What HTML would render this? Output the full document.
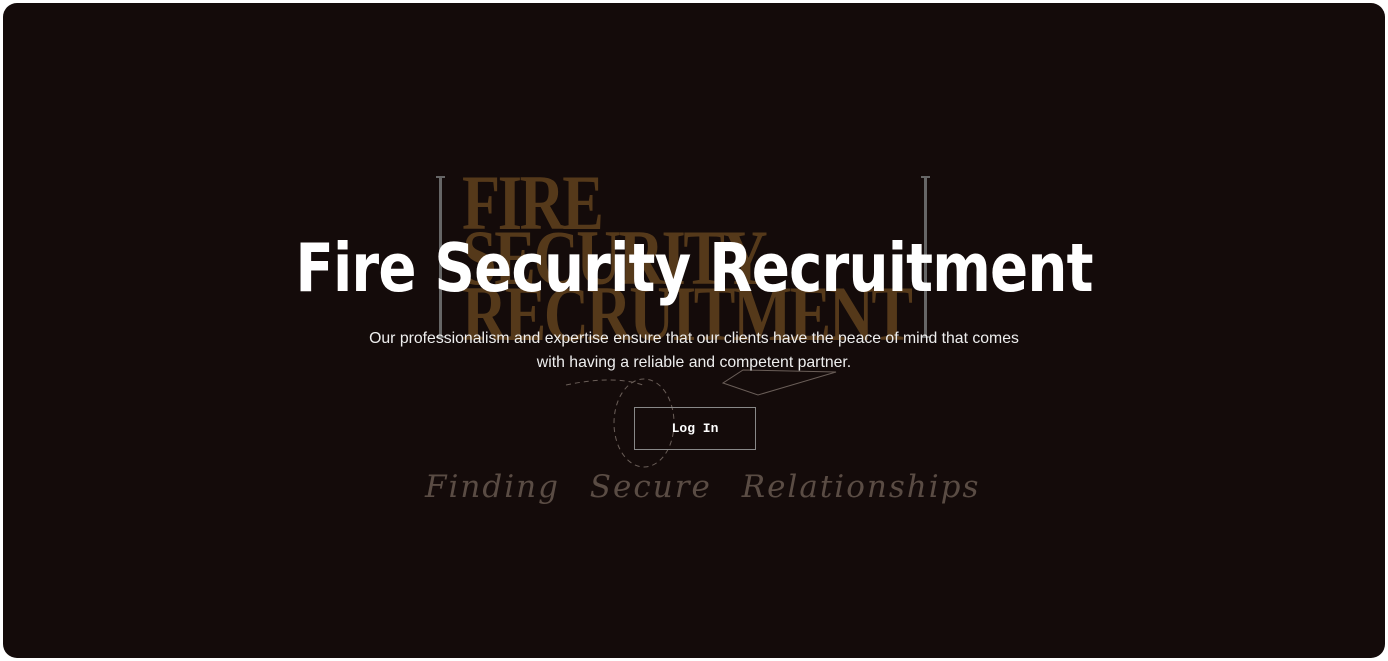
<!DOCTYPE html>
<html><head><meta charset="utf-8"><style>
html,body{margin:0;padding:0;background:#fff;width:1388px;height:661px;overflow:hidden}
.card{position:absolute;left:3px;top:3px;width:1382px;height:655px;background:#140b0a;border-radius:14px;overflow:hidden}
.logo{position:absolute;font-family:"Liberation Serif",serif;font-weight:bold;color:#55391a;transform-origin:left top;line-height:1;letter-spacing:-3px;font-size:78px;transform:scaleX(.8);white-space:nowrap}
.bar{position:absolute;width:3px;background:#666;top:173px;height:162px}
.bar:before,.bar:after{content:"";position:absolute;left:-3px;width:9px;height:2px;background:#666}
.bar:before{top:0}.bar:after{bottom:0}
h1{position:absolute;left:0;right:0;top:226px;margin:0;text-align:center;font-family:"DejaVu Sans","Liberation Sans",sans-serif;font-weight:600;font-size:67px;color:#fff;letter-spacing:-1px;transform:scaleX(.84)}
p{position:absolute;left:0;right:0;top:324px;margin:0;text-align:center;font-family:"Liberation Sans",sans-serif;font-size:15.8px;line-height:24px;color:#eee}
.btn{position:absolute;left:631px;top:404px;width:120px;height:41px;border:1px solid #888;color:#fff;font-family:"Liberation Mono",monospace;font-weight:bold;font-size:13px;text-align:center;line-height:41px}
.script{position:absolute;left:422px;top:466px;font-family:"DejaVu Serif",serif;font-style:italic;font-size:31px;color:#5a4c44;letter-spacing:2px;word-spacing:18px;white-space:nowrap}
</style></head><body>
<div class="card">
<div class="bar" style="left:436px"></div>
<div class="bar" style="left:921px"></div>
<div class="logo" style="left:459px;top:161px">FIRE</div>
<div class="logo" style="left:459px;top:216px">SECURITY</div>
<div class="logo" style="left:459px;top:272px">RECRUITMENT</div>
<svg style="position:absolute;left:0;top:0" width="1382" height="655" fill="none" stroke="#6a5e58" stroke-width="1">
<path d="M563 382 Q610 372 640 382" stroke-dasharray="5 4"/>
<ellipse cx="641" cy="420" rx="30" ry="44" stroke-dasharray="5 4"/>
<path d="M720 380 L755 392 L833 369 L740 367 Z"/>
</svg>
<h1>Fire Security Recruitment</h1>
<p>Our professionalism and expertise ensure that our clients have the peace of mind that comes<br>with having a reliable and competent partner.</p>
<div class="btn">Log In</div>
<div class="script">Finding Secure Relationships</div>
</div>
</body></html>
